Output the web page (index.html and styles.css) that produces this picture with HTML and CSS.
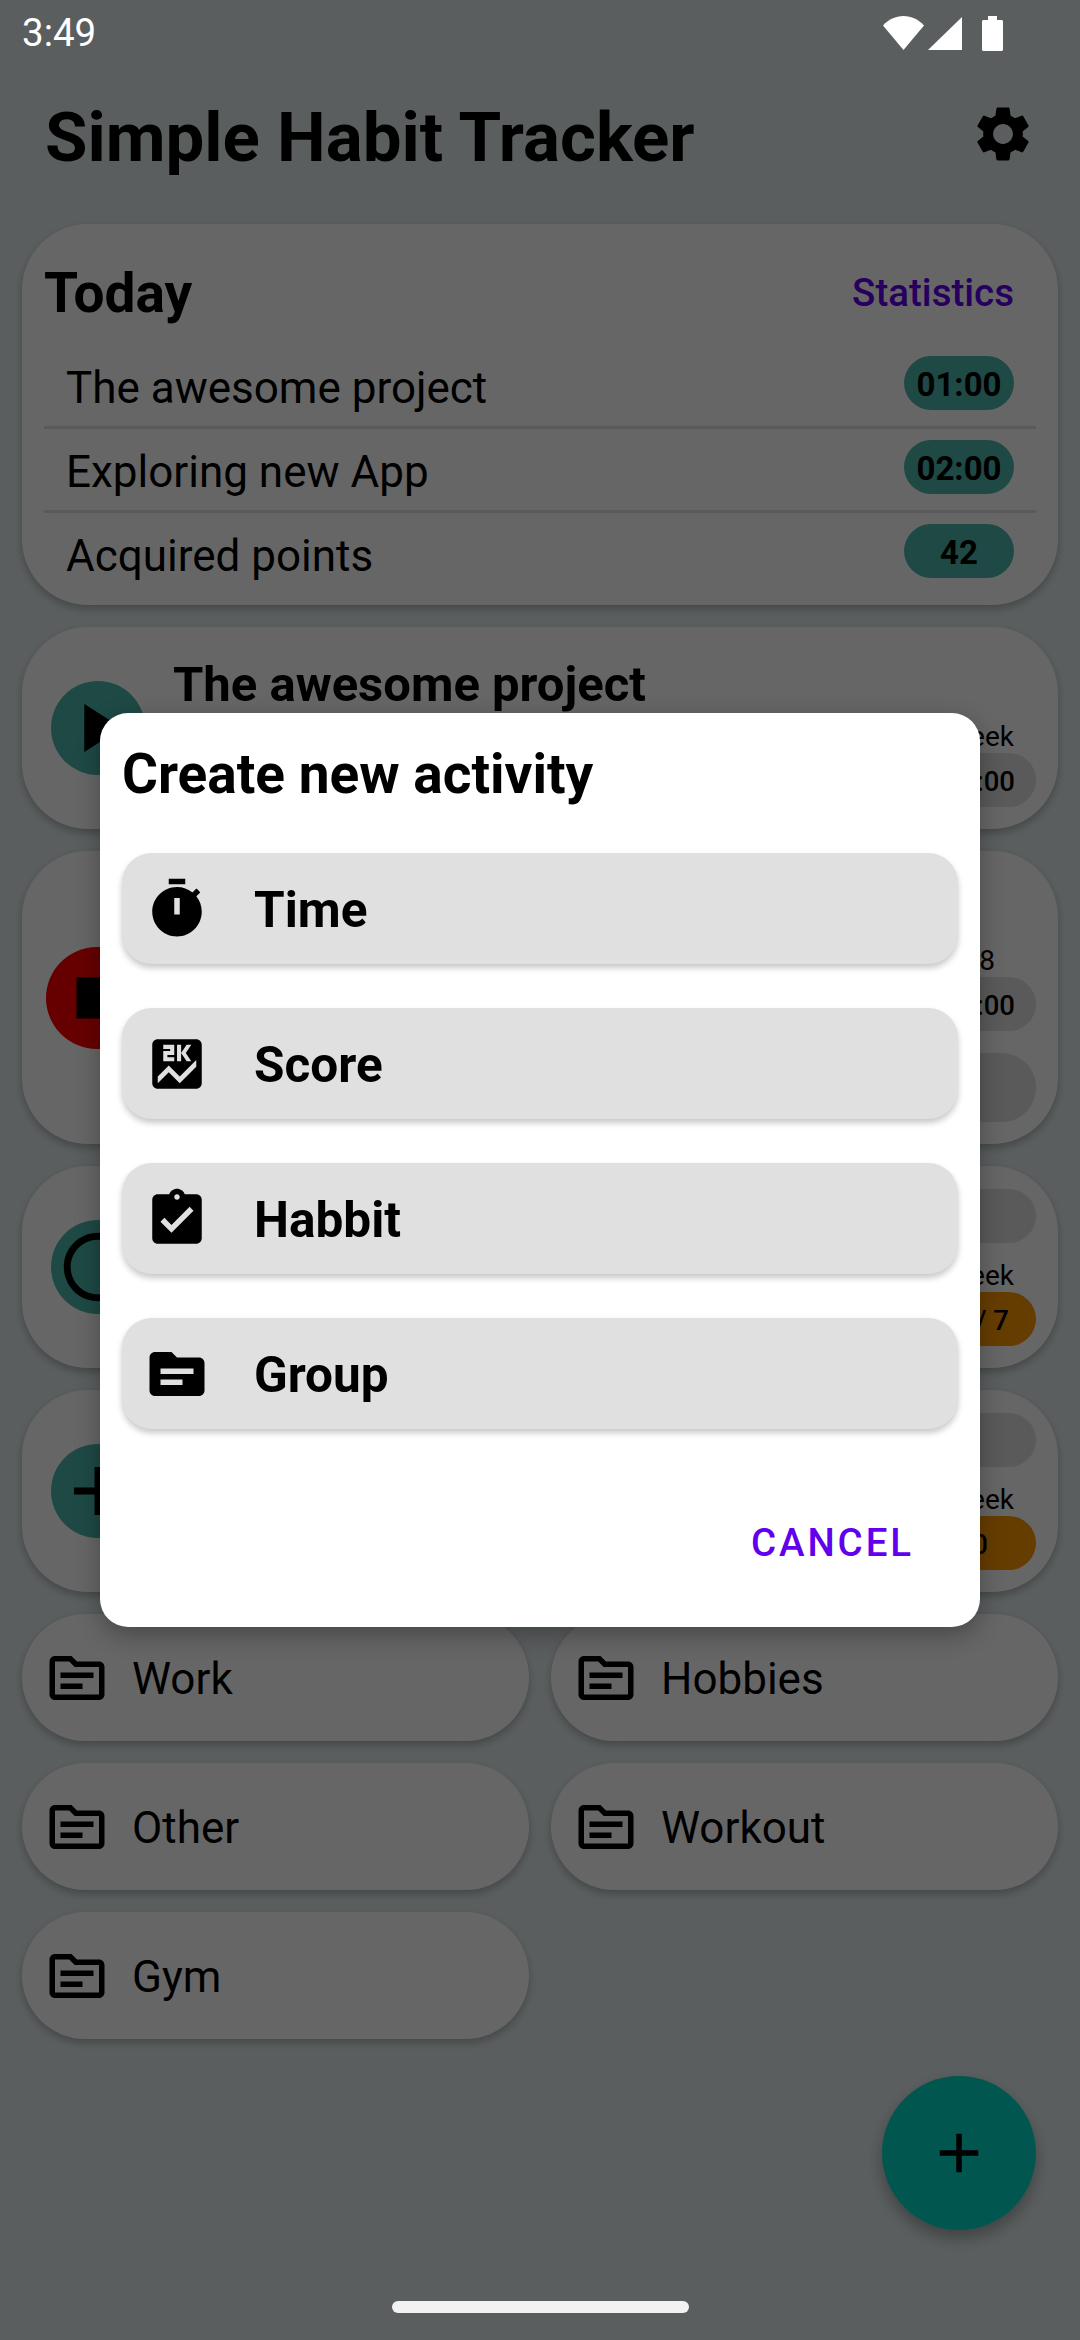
FILE: index.html

```html
<!DOCTYPE html>
<html lang="en">
<head>
<meta charset="UTF-8" />
<meta name="viewport" content="width=device-width, initial-scale=1.0" />
<title>Simple Habit Tracker</title>
<link rel="stylesheet" href="styles.css">
</head>
<body>
<div class="app">

  <div class="status-bar">
    <span class="clock">3:49</span>
    <div class="status-icons">
      <svg class="wifi" viewBox="0 0 41 34"><path d="M0 9.5C5.5 3.5 12.6 0 20.5 0S35.500 3.500 41 9.500L20.500 34z"/></svg>
      <svg class="signal" viewBox="0 0 34 33"><path d="M34 0v33H0z"/></svg>
      <svg class="battery" viewBox="0 0 21 35"><path d="M6 0h9v4h4.500c.9 0 1.500.6 1.500 1.500v28c0 .9-.6 1.500-1.500 1.500h-18C.6 35 0 34.400 0 33.500v-28C0 4.600.6 4 1.500 4H6z"/></svg>
    </div>
  </div>

  <header class="app-header">
    <h1>Simple Habit Tracker</h1>
    <svg class="icon" viewBox="0 0 24 24"><path d="M19.14 12.94c.04-.3.06-.61.06-.94 0-.32-.02-.64-.07-.94l2.030-1.580c.18-.14.23-.41.12-.61l-1.920-3.320c-.12-.22-.37-.29-.59-.22l-2.390.96c-.5-.38-1.030-.7-1.620-.94l-.36-2.540c-.04-.24-.24-.41-.48-.41h-3.840c-.24 0-.43.17-.47.41l-.36 2.540c-.59.24-1.130.57-1.620.94l-2.390-.96c-.22-.08-.47 0-.59.22L2.740 8.870c-.12.21-.08.47.12.61l2.030 1.580c-.05.3-.09.63-.09.94s.02.64.07.94l-2.030 1.580c-.18.14-.23.41-.12.61l1.920 3.320c.12.22.37.29.59.22l2.390-.96c.5.38 1.030.7 1.620.94l.36 2.540c.05.24.24.41.48.41h3.840c.24 0 .44-.17.47-.41l.36-2.540c.59-.24 1.130-.56 1.620-.94l2.390.96c.22.08.47 0 .59-.22l1.920-3.320c.12-.22.07-.47-.12-.61l-2.010-1.580zM12 15.600c-1.980 0-3.600-1.620-3.600-3.600s1.620-3.600 3.600-3.600 3.600 1.620 3.600 3.600-1.620 3.600-3.600 3.600z"/></svg>
  </header>

  <main class="content">

    <section class="card today">
      <div class="today-head">
        <h2>Today</h2>
        <a class="stats-link">Statistics</a>
      </div>
      <div class="today-row">
        <span>The awesome project</span>
        <span class="pill pill-teal">01:00</span>
      </div>
      <div class="today-row">
        <span>Exploring new App</span>
        <span class="pill pill-teal">02:00</span>
      </div>
      <div class="today-row">
        <span>Acquired points</span>
        <span class="pill pill-teal">42</span>
      </div>
    </section>

    <section class="card activity">
      <div class="round-btn round-teal">
        <svg class="btn-icon" viewBox="0 0 24 24"><path d="M8 5v14l11-7z"/></svg>
      </div>
      <h3>The awesome project</h3>
      <div class="activity-stats">
        <span class="stat-label">Week</span>
        <span class="pill pill-stat">05:00</span>
      </div>
    </section>

    <section class="card activity activity-running">
      <div class="round-btn round-red">
        <svg class="btn-icon" viewBox="0 0 24 24"><path d="M6 6h12v12H6z"/></svg>
      </div>
      <div class="activity-stats">
        <span class="stat-label stat-date">Feb 8</span>
        <span class="pill pill-stat">02:00</span>
        <span class="pill pill-stat pill-tall"></span>
      </div>
    </section>

    <section class="card activity">
      <div class="round-btn round-teal">
        <svg class="btn-icon" viewBox="0 0 24 24"><path d="M12 2C6.480 2 2 6.480 2 12s4.480 10 10 10 10-4.480 10-10S17.520 2 12 2zm0 18c-4.420 0-8-3.580-8-8s3.580-8 8-8 8 3.580 8 8-3.580 8-8 8z"/></svg>
      </div>
      <div class="activity-stats">
        <span class="pill pill-stat"></span>
        <span class="stat-label spaced">Week</span>
        <span class="pill pill-stat pill-orange">3 / 7</span>
      </div>
    </section>

    <section class="card activity">
      <div class="round-btn round-teal">
        <svg class="btn-icon" viewBox="0 0 24 24"><path d="M19 13h-6v6h-2v-6H5v-2h6V5h2v6h6v2z"/></svg>
      </div>
      <div class="activity-stats">
        <span class="pill pill-stat"></span>
        <span class="stat-label spaced">Week</span>
        <span class="pill pill-stat pill-orange pill-score">0</span>
      </div>
    </section>

    <div class="folders">
      <div class="card folder">
        <svg class="icon" viewBox="0 0 24 24"><use href="#topic-outline"/></svg>
        <span>Work</span>
      </div>
      <div class="card folder">
        <svg class="icon" viewBox="0 0 24 24"><use href="#topic-outline"/></svg>
        <span>Hobbies</span>
      </div>
      <div class="card folder">
        <svg class="icon" viewBox="0 0 24 24"><use href="#topic-outline"/></svg>
        <span>Other</span>
      </div>
      <div class="card folder">
        <svg class="icon" viewBox="0 0 24 24"><use href="#topic-outline"/></svg>
        <span>Workout</span>
      </div>
      <div class="card folder">
        <svg class="icon" viewBox="0 0 24 24"><use href="#topic-outline"/></svg>
        <span>Gym</span>
      </div>
    </div>
  </main>

  <div class="fab">
    <svg class="icon" viewBox="0 0 24 24"><path d="M19 13h-6v6h-2v-6H5v-2h6V5h2v6h6v2z"/></svg>
  </div>

  <div class="scrim">
    <div class="dialog">
      <h2>Create new activity</h2>
      <div class="option-list">
        <div class="option">
          <svg class="icon" viewBox="0 0 24 24"><path fill-rule="evenodd" d="M15 1H9v2h6V1zm4.030 6.390l1.420-1.420c-.43-.51-.9-.99-1.410-1.410l-1.420 1.420C16.070 4.740 14.120 4 12 4c-4.970 0-9 4.030-9 9s4.030 9 9 9 9-4.030 9-9c0-2.120-.74-4.070-1.970-5.610zM13 14h-2V8h2v6z"/></svg>
          <span>Time</span>
        </div>
        <div class="option">
          <svg class="icon" viewBox="0 0 24 24"><path fill-rule="evenodd" d="M19 3H5c-1.100 0-2 .9-2 2v14c0 1.100.9 2 2 2h14c1.100 0 2-.9 2-2V5c0-1.100-.9-2-2-2zM12 5h1.500v3l2-3h1.700l-2 3 2 3h-1.700l-2-3v3H12V5zM7 7.250h2.500V6.500H7V5h4v3.750H8.500v.75H11V11H7V7.250zM19 13l-6 6-4-4-4 4v-2.500l4-4 4 4 6-6V13z"/></svg>
          <span>Score</span>
        </div>
        <div class="option">
          <svg class="icon" viewBox="0 0 24 24"><path fill-rule="evenodd" d="M19 3h-4.180C14.400 1.840 13.300 1 12 1c-1.300 0-2.400.84-2.820 2H5c-1.100 0-2 .9-2 2v14c0 1.100.9 2 2 2h14c1.100 0 2-.9 2-2V5c0-1.100-.9-2-2-2zm-7 0c.55 0 1 .45 1 1s-.45 1-1 1-1-.45-1-1 .45-1 1-1zm-2 14l-4-4 1.410-1.410L10 14.170l6.590-6.590L18 9l-8 8z"/></svg>
          <span>Habbit</span>
        </div>
        <div class="option">
          <svg class="icon" viewBox="0 0 24 24"><path fill-rule="evenodd" d="M20 6h-8l-2-2H4c-1.100 0-1.990.9-1.990 2L2 18c0 1.100.9 2 2 2h16c1.100 0 2-.9 2-2V8c0-1.100-.9-2-2-2zm-6 10H6v-2h8v2zm4-4H6v-2h12v2z"/></svg>
          <span>Group</span>
        </div>
      </div>
      <div class="dialog-actions">
        <a class="text-btn">Cancel</a>
      </div>
    </div>
  </div>

  <div class="home-bar"></div>

  <svg class="defs" width="0" height="0">
    <defs>
      <path id="topic-outline" fill-rule="evenodd" d="M20 6h-8l-2-2H4c-1.100 0-1.990.9-1.990 2L2 18c0 1.100.9 2 2 2h16c1.100 0 2-.9 2-2V8c0-1.100-.9-2-2-2zm0 12H4V6h5.170l2 2H20v10zM6 14h8v2H6zm0-4h12v2H6z"/>
    </defs>
  </svg>
</div>
</body>
</html>
```

FILE: styles.css

```css
* {
  box-sizing: border-box;
}

html, body {
  margin: 0;
  height: 2340px;
  overflow: hidden;
}

body {
  font-family: Roboto, "Liberation Sans", sans-serif;
  color: #000;
  background: #e3ecee;
}

h1, h2, h3 {
  margin: 0;
}

.app {
  position: relative;
  height: 2340px;
}

.icon {
  width: 66px;
  height: 66px;
  flex: none;
  display: block;
}

.defs {
  position: absolute;
}

/* status bar sits above the scrim */
.status-bar {
  position: relative;
  z-index: 3;
  height: 66px;
  padding: 0 22px;
  display: flex;
  justify-content: space-between;
  align-items: center;
  color: #fff;
}

.clock {
  font-size: 38.5px;
  line-height: 66px;
}

.status-icons {
  display: flex;
  align-items: center;
  padding-right: 55px;
}

.status-icons svg {
  fill: #fff;
  display: block;
}

.wifi {
  width: 41px;
  height: 34px;
}

.signal {
  width: 34px;
  height: 33px;
  margin-left: 4px;
}

.battery {
  width: 21px;
  height: 35px;
  margin-left: 20px;
}

.app-header {
  height: 136px;
  padding: 0 44px 0 45px;
  display: flex;
  justify-content: space-between;
  align-items: center;
}

.app-header h1 {
  font-size: 69px;
  font-weight: 700;
  padding-top: 6px;
}

.content {
  padding: 22px 22px 0;
  display: flex;
  flex-direction: column;
  gap: 22px;
}

.card {
  background: #fff;
  border-radius: 66px;
  box-shadow: 0 4px 8px rgba(0,0,0,0.25);
}

/* today summary */
.today {
  padding: 0 22px 8px;
  height: 381px;
}

.today-head {
  height: 121px;
  padding-top: 16px;
  display: flex;
  justify-content: space-between;
  align-items: center;
}

.today-head h2 {
  font-size: 55px;
  font-weight: 700;
}

.stats-link {
  font-size: 38.5px;
  font-weight: 500;
  color: #6200ee;
  padding-right: 22px;
}

.today-row {
  height: 84px;
  padding: 11px 22px 0;
  display: flex;
  justify-content: space-between;
  align-items: flex-start;
  font-size: 44px;
  border-bottom: 3px solid #e0e0e0;
}

.today-row:last-child {
  border-bottom: none;
}

.today-row span:first-child {
  line-height: 64px;
}

.pill {
  height: 54px;
  padding-top: 2px;
  border-radius: 27px;
  display: flex;
  align-items: center;
  justify-content: center;
  font-size: 33px;
  font-weight: 700;
}

.pill-teal {
  width: 110px;
  background: #4db6ac;
}

.pill-stat {
  min-width: 126px;
  padding: 2px 21px 0;
  font-size: 27.5px;
  font-weight: 500;
  justify-content: flex-end;
  background: #e0e0e0;
}

.pill-tall {
  height: 69px;
  border-radius: 34px;
  margin-top: 22px;
}

.pill-orange {
  padding-right: 27px;
  background: #ff9800;
}

.pill-score {
  padding-right: 48px;
  min-width: 200px;
}

/* activity cards */
.activity {
  position: relative;
  padding: 22px;
  min-height: 202px;
  display: flex;
  align-items: center;
}

.activity-running {
  height: 293px;
}

.activity h3 {
  align-self: flex-start;
  margin-left: 28px;
  font-size: 49px;
  font-weight: 700;
  line-height: 50px;
  padding-top: 11px;
}

.round-btn {
  width: 94px;
  height: 94px;
  margin-left: 7px;
  flex: none;
  border-radius: 50%;
  display: flex;
  align-items: center;
  justify-content: center;
}

.round-teal {
  background: #4db6ac;
}

.round-red {
  width: 102px;
  height: 102px;
  margin-left: 2px;
  margin-right: -4px;
  background: #ff0000;
}

.btn-icon {
  width: 82px;
  height: 82px;
  flex: none;
}

.activity-stats {
  margin-left: auto;
  align-self: flex-end;
  display: flex;
  flex-direction: column;
  align-items: flex-end;
}

.stat-label {
  font-size: 28px;
  line-height: 33px;
  padding-right: 22px;
}

.stat-label.spaced {
  margin-top: 16px;
}

.stat-label.stat-date {
  padding-right: 41px;
}

/* folders */
.folders {
  display: grid;
  grid-template-columns: 1fr 1fr;
  gap: 22px;
}

.folder {
  height: 127px;
  padding-left: 22px;
  display: flex;
  align-items: center;
  gap: 22px;
  font-size: 44px;
}

.folder span {
  padding-top: 3px;
}

.fab {
  position: absolute;
  right: 44px;
  bottom: 110px;
  width: 154px;
  height: 154px;
  border-radius: 50%;
  background: #03dac5;
  box-shadow: 0 8px 16px rgba(0,0,0,0.3);
  display: flex;
  align-items: center;
  justify-content: center;
}

/* dialog */
.scrim {
  position: absolute;
  inset: 0;
  z-index: 2;
  background: rgba(0,0,0,0.6);
  display: flex;
  align-items: center;
  justify-content: center;
}

.dialog {
  width: 880px;
  height: 914px;
  padding: 22px;
  background: #fff;
  border-radius: 28px;
  box-shadow: 0 8px 24px rgba(0,0,0,0.3);
}

.dialog h2 {
  font-size: 55px;
  font-weight: 700;
  height: 118px;
  line-height: 78px;
}

.option-list {
  display: flex;
  flex-direction: column;
  gap: 44px;
}

.option {
  height: 111px;
  padding-left: 22px;
  background: #e0e0e0;
  border-radius: 30px;
  box-shadow: 0 4px 6px rgba(0,0,0,0.22);
  display: flex;
  align-items: center;
  gap: 44px;
  font-size: 49.5px;
  font-weight: 700;
}

.option span {
  padding-top: 3px;
}

.dialog-actions {
  margin-top: 91px;
  display: flex;
  justify-content: flex-end;
  padding-right: 44px;
}

.text-btn {
  font-size: 38.5px;
  font-weight: 500;
  letter-spacing: 2.9px;
  text-transform: uppercase;
  color: #6200ee;
}

.home-bar {
  position: absolute;
  z-index: 3;
  left: 0;
  right: 0;
  bottom: 27px;
  margin: 0 auto;
  width: 297px;
  height: 12px;
  border-radius: 6px;
  background: #f2f2f2;
}
```
